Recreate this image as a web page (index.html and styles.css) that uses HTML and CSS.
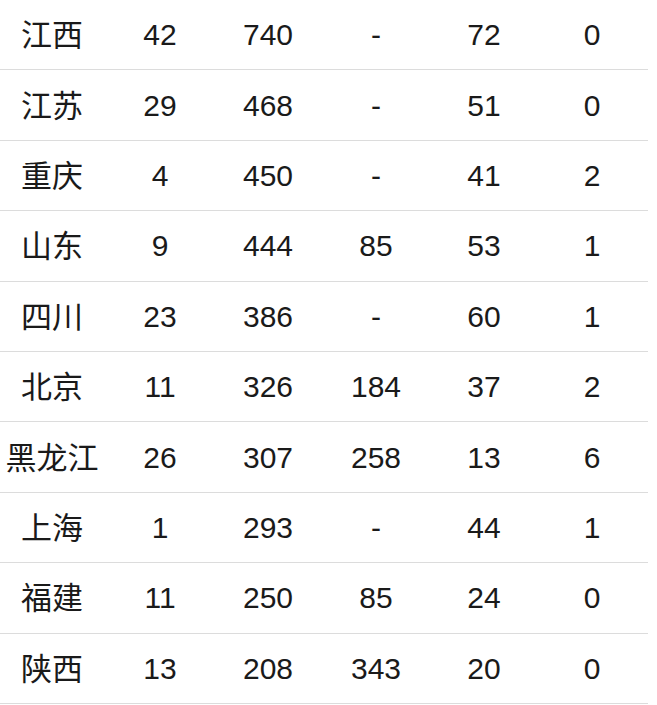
FILE: index.html
```html
<!DOCTYPE html>
<html lang="zh">
<head>
<meta charset="utf-8">
<link rel="stylesheet" href="styles.css">
</head>
<body>
<div class="table">
  <div class="row"><span class="name">江西</span><span>42</span><span>740</span><span>-</span><span>72</span><span>0</span></div>
  <div class="row"><span class="name">江苏</span><span>29</span><span>468</span><span>-</span><span>51</span><span>0</span></div>
  <div class="row"><span class="name">重庆</span><span>4</span><span>450</span><span>-</span><span>41</span><span>2</span></div>
  <div class="row"><span class="name">山东</span><span>9</span><span>444</span><span>85</span><span>53</span><span>1</span></div>
  <div class="row"><span class="name">四川</span><span>23</span><span>386</span><span>-</span><span>60</span><span>1</span></div>
  <div class="row"><span class="name">北京</span><span>11</span><span>326</span><span>184</span><span>37</span><span>2</span></div>
  <div class="row"><span class="name">黑龙江</span><span>26</span><span>307</span><span>258</span><span>13</span><span>6</span></div>
  <div class="row"><span class="name">上海</span><span>1</span><span>293</span><span>-</span><span>44</span><span>1</span></div>
  <div class="row"><span class="name">福建</span><span>11</span><span>250</span><span>85</span><span>24</span><span>0</span></div>
  <div class="row"><span class="name">陕西</span><span>13</span><span>208</span><span>343</span><span>20</span><span>0</span></div>
</div>
</body>
</html>
```
FILE: styles.css
```css
html, body {
  margin: 0;
  padding: 0;
  background: #fff;
}
.table {
  width: 648px;
  font-family: "Liberation Sans", Arial, "Noto Sans CJK SC", sans-serif;
  font-size: 30px;
  color: #1a1a1a;
}
.row {
  display: grid;
  grid-template-columns: repeat(6, 108px);
  align-items: center;
  height: 70.4px;
  box-sizing: border-box;
  border-bottom: 1px solid #dcdcdc;
}
.row span {
  text-align: center;
  white-space: nowrap;
  padding-top: 1px;
  padding-right: 4px;
}
.row .name {
  font-family: "Noto Sans CJK SC", sans-serif;
  font-size: 31px;
  line-height: 1;
  padding-top: 0;
  padding-bottom: 4px;
}
```
